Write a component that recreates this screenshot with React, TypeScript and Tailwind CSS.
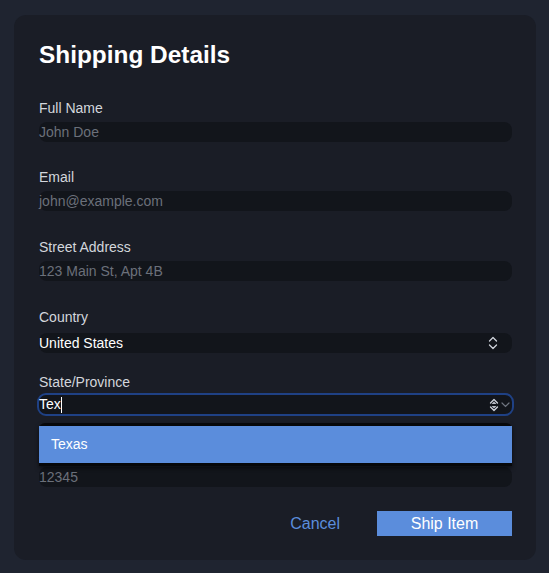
import React from "react";

const font = { fontFamily: '"Liberation Sans", Arial, sans-serif' };

const Chevrons = ({ filled }: { filled?: boolean }) => (
  <svg width="10" height="16" viewBox="0 0 10 16" fill="none" className="shrink-0">
    {filled && <path d="M2.5 7 L5 4.5 L7.5 7 Z M2.5 9 L5 11.5 L7.5 9 Z" fill="#b9bec7" />}
    <path d="M1.5 6 L5 2.5 L8.5 6" stroke="#cfd3da" strokeWidth="1.3" strokeLinecap="round" strokeLinejoin="round" />
    <path d="M1.5 10 L5 13.5 L8.5 10" stroke="#cfd3da" strokeWidth="1.3" strokeLinecap="round" strokeLinejoin="round" />
  </svg>
);

const Label = ({ children }: { children: React.ReactNode }) => (
  <div className="text-[14px] leading-[20px] text-[#d3d6dc]">{children}</div>
);

const TextField = ({ label, placeholder, className }: { label: string; placeholder: string; className?: string }) => (
  <div className={className}>
    <Label>{label}</Label>
    <div className="mt-[4px] flex h-[20px] items-center rounded-[8px] bg-[#12151b] text-[14px] text-[#6b707a]">
      {placeholder}
    </div>
  </div>
);

export default function App() {
  return (
    <div className="min-h-[573px] bg-[#1f2430] pl-[14px] pt-[15px]" style={font}>
      <div className="flex h-[545px] w-[522px] flex-col rounded-[12px] bg-[#1a1d26] pl-[25px] pr-[24px] pt-[24px]">
        <h1 className="text-[24.4px] font-bold leading-[32px] text-white">Shipping Details</h1>

        <TextField className="mt-[27px]" label="Full Name" placeholder="John Doe" />
        <TextField className="mt-[25px]" label="Email" placeholder="john@example.com" />
        <TextField className="mt-[26px]" label="Street Address" placeholder="123 Main St, Apt 4B" />

        <div className="mt-[26px]">
          <Label>Country</Label>
          <div className="mt-[6px] flex h-[20px] items-center justify-between rounded-[8px] bg-[#12151b] pr-[14px] text-[14px] text-white">
            <span>United States</span>
            <Chevrons />
          </div>
        </div>

        <div className="relative mt-[19px]">
          <Label>State/Province</Label>
          <div className="-mx-[2px] mt-[1px] flex h-[23px] items-center justify-between rounded-[9px] border-[2.5px] border-[#1f4185] bg-[#12151b] pr-[2px] text-[14px] text-white">
            <span className="flex items-center">
              Tex<span className="inline-block h-[16px] w-[1.5px] bg-white" />
            </span>
            <span className="flex items-center gap-[2px]">
              <Chevrons filled />
              <svg width="9" height="6" viewBox="0 0 9 6" fill="none">
                <path d="M1 1 L4.5 4.5 L8 1" stroke="#6f7580" strokeWidth="1.2" strokeLinecap="round" />
              </svg>
            </span>
          </div>

          {/* datalist popup covers the zip label */}
          <div className="absolute left-0 right-0 top-[51px] z-10 rounded-t-[6px] bg-[#07080a] py-[3px] shadow-[0_2px_4px_rgba(0,0,0,0.6)]">
            <div className="flex h-[37px] items-center bg-[#5b8ddc] pl-[12px] text-[14px] text-white">Texas</div>
          </div>
        </div>

        <TextField className="mt-[27px]" label="Zip Code" placeholder="12345" />

        <div className="mt-[24px] flex items-center justify-end">
          <button className="mr-[37px] text-[16px] text-[#5b8ddc]">Cancel</button>
          <button className="flex h-[25px] w-[135px] items-center justify-center bg-[#5b8ddc] text-[16px] text-white">
            Ship Item
          </button>
        </div>
      </div>
    </div>
  );
}
